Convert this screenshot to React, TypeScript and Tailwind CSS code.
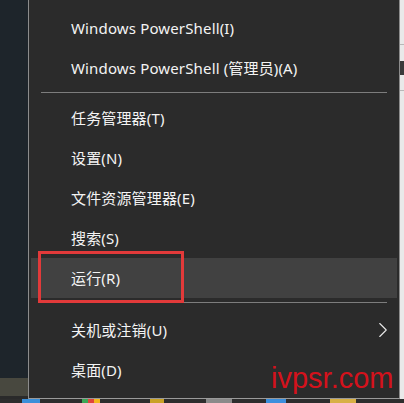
import { ChevronRight } from 'lucide-react';

type Item = { label: string; active?: boolean; sub?: boolean };

const groupA: Item[] = [
  { label: 'Windows PowerShell(I)' },
  { label: 'Windows PowerShell (管理员)(A)' },
];

const groupB: Item[] = [
  { label: '任务管理器(T)' },
  { label: '设置(N)' },
  { label: '文件资源管理器(E)' },
  { label: '搜索(S)' },
  { label: '运行(R)', active: true },
];

const groupC: Item[] = [
  { label: '关机或注销(U)', sub: true },
  { label: '桌面(D)' },
];

function Row({ item }: { item: Item }) {
  return (
    <div
      className={`flex h-10 items-center justify-between pl-[40px] pr-[1px] text-[15px] text-[#f4f4f4] ${
        item.active ? 'bg-[#414141]' : ''
      }`}
    >
      <span className="tracking-[0.15px]">{item.label}</span>
      {item.sub && <ChevronRight size={26} strokeWidth={1} className="text-[#e8e8e8]" />}
    </div>
  );
}

function Separator({ height }: { height: string }) {
  return (
    <div className={`${height} px-[10px] pt-[4px]`}>
      <div className="h-px bg-[#7d7d7d]" />
    </div>
  );
}

export default function App() {
  return (
    <div
      className="relative flex h-[403px] w-[404px] flex-col overflow-hidden bg-[#1e252b]"
      style={{ fontFamily: '"Noto Sans", "Noto Sans CJK SC", sans-serif' }}
    >
      <div className="flex h-[399px]">
        {/* desktop left of menu */}
        <div className="flex w-[28px] flex-col">
          <div className="flex-1 bg-[#1e252b]" />
          <div className="h-[18px] bg-[#48483f]" />
          <div className="h-[3px] bg-[#2a2a2a]" />
        </div>

        {/* start button context menu */}
        <div className="w-[372px] border-x border-b border-x-[#8c8c8c] border-b-[#9a9a9a] bg-[#2b2b2b] px-[2px] pt-[8px]">
          {groupA.map((it) => (
            <Row key={it.label} item={it} />
          ))}
          <Separator height="h-[10px]" />
          {groupB.map((it) => (
            <Row key={it.label} item={it} />
          ))}
          <Separator height="h-[12px]" />
          {groupC.map((it) => (
            <Row key={it.label} item={it} />
          ))}
        </div>

        {/* window behind, right edge */}
        <div className="flex w-[4px] flex-col bg-[#e9e9e9]">
          <div className="mt-[44px] h-px bg-[#b8b8b8]" />
          <div className="mt-[16px] h-[14px] bg-[#3a3a3a]" />
          <div className="mt-[15px] h-px bg-[#b8b8b8]" />
        </div>
      </div>

      {/* taskbar */}
      <div className="flex h-[4px] items-stretch bg-[#2d2d2d]">
        <div className="ml-[22px] w-[18px] bg-[#3b8fd9]" />
        <div className="ml-[42px] w-[6px] bg-[#3aa757]" />
        <div className="w-[6px] bg-[#e0443a]" />
        <div className="w-[6px] bg-[#f3b71e]" />
        <div className="ml-[50px] w-[14px] bg-[#c9a227]" />
        <div className="ml-[42px] w-[26px] bg-[#8a8a8a]" />
        <div className="ml-[34px] w-[20px] bg-[#3c8fdd]" />
        <div className="ml-[44px] w-[26px] bg-[#d8b045]" />
      </div>

      {/* highlight annotation */}
      <div className="absolute left-[38px] top-[251px] h-[52px] w-[146px] border-[3px] border-[#e23a3a]" />

      {/* watermark */}
      <div
        className="absolute left-[271px] top-[364px] text-[29px] leading-none text-[#d4121c]"
        style={{ fontFamily: '"Liberation Sans", sans-serif' }}
      >
        ivpsr.com
      </div>
    </div>
  );
}
